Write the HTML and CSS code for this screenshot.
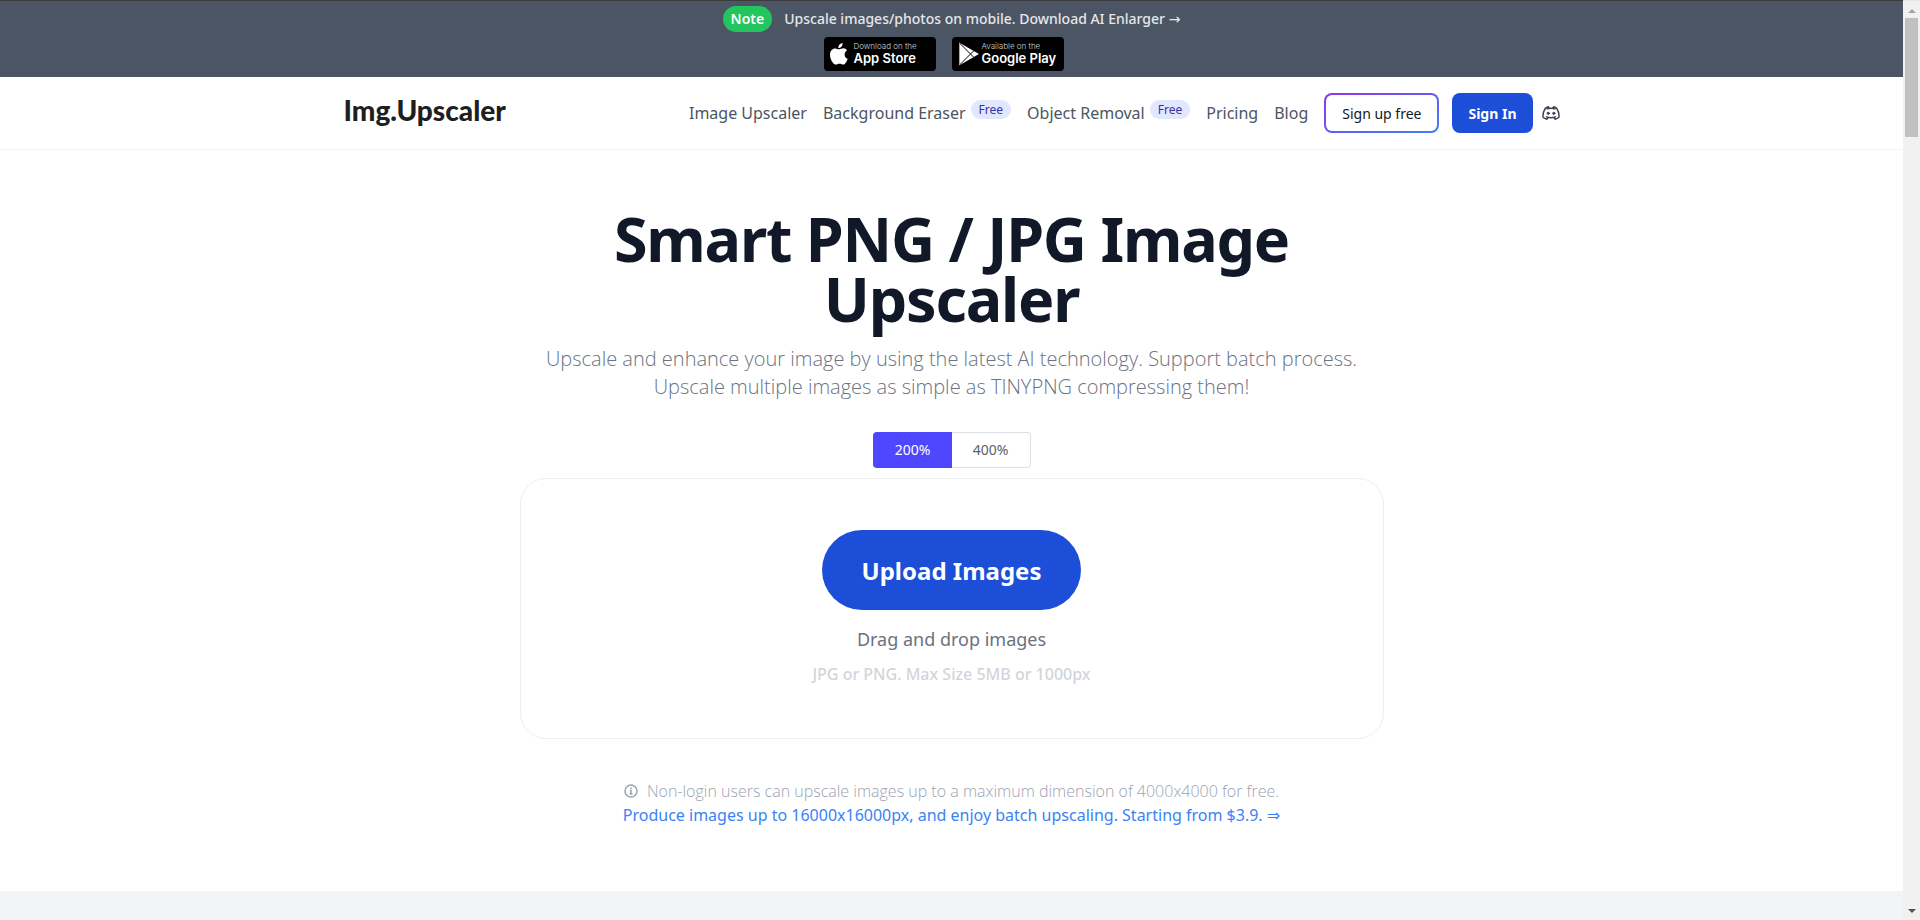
FILE: index.html
```html
<!DOCTYPE html>
<html lang="en">
<head>
    <meta charset="UTF-8">
    <meta name="viewport" content="width=device-width, initial-scale=1.0">
    <title>Img.Upscaler</title>
    <link rel="stylesheet" href="styles.css">
</head>
<body>
    <div class="page">
        <div class="banner">
            <div class="banner-line">
                <span class="note">Note</span>
                <a class="banner-link" href="#">Upscale images/photos on mobile. Download AI Enlarger <span class="arrow">→</span></a>
            </div>
            <div class="stores">
                <a class="store" href="#">
                    <svg class="apple" viewBox="0 0 18 22" width="18" height="22" fill="#fff" aria-hidden="true">
                        <path d="M12.6 0c.2 1.5-.4 2.800-1.200 3.700-.8.900-2 1.500-3 1.400-.2-1.300.4-2.600 1.200-3.500C10.400.7 11.600.1 12.600 0zM17 7.500c-1.500.9-2.400 2.200-2.400 4 0 2.100 1.200 3.600 3.100 4.300-.5 1.700-1.400 3.200-2.500 4.600-.7.900-1.500 1.300-2.500 1.200-1.200-.2-2-.8-3.300-.8s-2.200.7-3.300.8c-1.200.1-2-.6-2.900-1.600C1.100 17.600 0 14.700 0 11.700c0-3.900 2.400-6.300 5.200-6.300 1.600 0 2.700.9 4 .9 1.200 0 2.400-1 4.300-1 1.400 0 2.700.8 3.500 2.200z"/>
                    </svg>
                    <span class="store-text">
                        <small>Download on the</small>
                        <b>App Store</b>
                    </span>
                </a>
                <a class="store" href="#">
                    <svg class="play" viewBox="0 0 22 24" width="22" height="24" fill="#fff" aria-hidden="true">
                        <path d="M1 0.500L21 12 1 23.500z"/>
                        <path d="M1 .5L15.500 15M1 23.500L15.500 9" stroke="#000" stroke-width="1" fill="none"/>
                        <path d="M1.500 1v22" stroke="#aaa" stroke-width="1"/>
                    </svg>
                    <span class="store-text">
                        <small>Available on the</small>
                        <b>Google Play</b>
                    </span>
                </a>
            </div>
        </div>

        <header class="header">
            <div class="header-inner">
                <a class="logo" href="#">Img.Upscaler</a>
                <nav class="nav">
                    <a href="#">Image Upscaler</a>
                    <a href="#">Background Eraser <span class="free">Free</span></a>
                    <a href="#">Object Removal <span class="free">Free</span></a>
                    <a href="#">Pricing</a>
                    <a href="#">Blog</a>
                    <div class="account">
                        <button class="sign-up" type="button">Sign up free</button>
                        <button class="sign-in" type="button">Sign In</button>
                        <a class="discord" href="#" aria-label="Discord">
                            <svg viewBox="0 0 18 14" width="18" height="14" fill="none" stroke="#374151" stroke-width="1.400" stroke-linecap="round" stroke-linejoin="round">
                                <path d="M4.500 10.800c2.800 1.100 6.200 1.100 9 0M4.800 2.900c2.700-.9 5.700-.9 8.400 0"/>
                                <path d="M12 11.700l1 1.500c1.600-.4 2.900-1 4-1.900.3-3.400-.6-6.500-2.500-9.300-1-.6-1.900-1-3-1.200l-.7 1.400M6 11.700l-1 1.500c-1.600-.4-2.900-1-4-1.900-.3-3.400.6-6.500 2.500-9.300 1-.6 1.900-1 3-1.200l.7 1.400"/>
                                <circle cx="6.200" cy="7.300" r="1.100" fill="#374151" stroke-width="1"/>
                                <circle cx="11.800" cy="7.300" r="1.100" fill="#374151" stroke-width="1"/>
                            </svg>
                        </a>
                    </div>
                </nav>
            </div>
        </header>

        <main class="hero">
            <h1>Smart PNG / JPG Image Upscaler</h1>
            <p class="intro">Upscale and enhance your image by using the latest AI technology. Support batch process.<br>Upscale multiple images as simple as TINYPNG compressing them!</p>

            <div class="scale" role="radiogroup" aria-label="Scale">
                <input type="radio" name="scale" id="scale200" checked>
                <label for="scale200">200%</label>
                <input type="radio" name="scale" id="scale400">
                <label for="scale400">400%</label>
            </div>

            <div class="dropzone">
                <button class="upload" type="button">Upload Images</button>
                <p class="drag">Drag and drop images</p>
                <p class="limit">JPG or PNG. Max Size 5MB or 1000px</p>
            </div>

            <div class="tips">
                <p class="tip">
                    <svg viewBox="0 0 14 14" width="14" height="14" fill="none" stroke="#9ca3af" stroke-width="1.500" aria-hidden="true">
                        <circle cx="7" cy="7" r="6"/>
                        <path d="M5.800 6.500H7V10M5.500 10h3M7 3.500v1.500"/>
                    </svg>
                    Non-login users can upscale images up to a maximum dimension of 4000x4000 for free.
                </p>
                <a class="offer" href="#">Produce images up to 16000x16000px, and enjoy batch upscaling. Starting from $3.9. <span class="arrow">⇒</span></a>
            </div>
        </main>
        <section class="next"></section>
    </div>

    <div class="scrollbar" aria-hidden="true">
        <i class="up"></i>
        <i class="thumb"></i>
        <i class="down"></i>
    </div>
</body>
</html>
```
FILE: styles.css
```css
* {
    box-sizing: border-box;
}
body {
    margin: 0;
    display: flex;
    height: 100vh;
    overflow: hidden;
    font-family: "Noto Sans", "Open Sans", sans-serif;
    font-size: 16px;
    line-height: 24px;
    color: #111827;
    background: #fff;
}
a {
    color: inherit;
    text-decoration: none;
}
button {
    font-family: inherit;
    cursor: pointer;
}
h1, p {
    margin: 0;
}
.page {
    flex: 1;
    display: flex;
    flex-direction: column;
    min-width: 0;
}

/* top banner */
.banner {
    background: #4b5563;
    border-top: 1px solid #3b3b3d;
    padding: 5px 0 6px;
}
.banner-line {
    display: flex;
    justify-content: center;
    align-items: center;
    gap: 12px;
    font-size: 14px;
}
.note {
    background: #22c55e;
    color: #fff;
    font-weight: 600;
    line-height: 26px;
    padding: 0 8px;
    border-radius: 13px;
}
.banner-link {
    color: #e5e7eb;
    font-weight: 500;
}
.arrow {
    font-family: "DejaVu Sans", sans-serif;
}
.stores {
    display: flex;
    justify-content: center;
    gap: 16px;
    padding: 5px 16px 0 0;
}
.store {
    display: flex;
    align-items: center;
    gap: 6px;
    width: 112px;
    height: 34px;
    padding-left: 6px;
    background: #000;
    border-radius: 4px;
    color: #fff;
    font-family: Inter, sans-serif;
    white-space: nowrap;
}
.play {
    margin-right: -4px;
}
.store-text {
    display: flex;
    flex-direction: column;
}
.store-text small {
    font-size: 8px;
    line-height: 9px;
    font-weight: 300;
    color: #d1d5db;
}
.store-text b {
    font-size: 13px;
    line-height: 15px;
    font-weight: 600;
}

/* header */
.header {
    border-bottom: 1px solid #f3f4f6;
}
.header-inner {
    display: flex;
    justify-content: space-between;
    align-items: center;
    max-width: 1280px;
    margin: 0 auto;
    padding: 16px 32px;
}
.logo {
    font-family: Lato, sans-serif;
    font-size: 28px;
    line-height: 32px;
    font-weight: 900;
    color: #1f1f1f;
    padding-bottom: 6px;
}
.nav {
    display: flex;
    align-items: center;
    gap: 16px;
    color: #4b5563;
}
.nav > a {
    display: flex;
    align-items: center;
    gap: 5px;
}
.free {
    margin-bottom: 8px;
    padding: 0 8px;
    border-radius: 10px;
    background: #e0e7ff;
    color: #3730a3;
    font-size: 12px;
    line-height: 19px;
}
.account {
    display: flex;
    align-items: center;
}
.sign-up, .sign-in {
    height: 40px;
    padding: 0 16px;
    border-radius: 8px;
    font-size: 14px;
}
.sign-up {
    border: 2px solid transparent;
    background: linear-gradient(#fff, #fff) padding-box, linear-gradient(to bottom right, #9333ea, #3b82f6) border-box;
    color: #111827;
}
.sign-in {
    margin: 0 9px 0 13px;
    border: none;
    background: #1d4ed8;
    color: #fff;
    font-weight: 700;
}
.discord {
    display: flex;
}

/* hero */
.hero {
    flex: none;
    width: 100%;
    max-width: 864px;
    margin: 0 auto;
    padding: 59px 0 63px;
    text-align: center;
}
h1 {
    max-width: 768px;
    margin: 0 auto;
    font-size: 61px;
    line-height: 60px;
    font-weight: 700;
    letter-spacing: -0.02em;
}
.intro {
    margin-top: 16px;
    font-family: "Open Sans", sans-serif;
    font-size: 20px;
    line-height: 28px;
    font-weight: 300;
    color: #6b7280;
}
.scale {
    display: flex;
    justify-content: center;
    margin: 31px 0 10px;
    font-size: 14px;
    line-height: 34px;
}
.scale input {
    position: absolute;
    opacity: 0;
}
.scale label {
    width: 79px;
    border: 1px solid #dcdfe6;
    color: #606266;
    cursor: pointer;
}
.scale label:first-of-type {
    border-radius: 4px 0 0 4px;
    border-right: none;
}
.scale label:last-of-type {
    border-radius: 0 4px 4px 0;
    border-left: none;
}
.scale input:checked + label {
    background: #4f46ff;
    border-color: #4f46ff;
    color: #fff;
}
.dropzone {
    padding: 51px 0 50px;
    border: 1px solid #eeeff1;
    border-radius: 26px;
}
.upload {
    height: 80px;
    padding: 0 40px;
    border: none;
    border-radius: 40px;
    background: #1d4ed8;
    color: #fff;
    font-size: 24px;
    font-weight: 700;
}
.drag {
    margin-top: 15px;
    font-size: 18px;
    line-height: 28px;
    color: #6b7280;
}
.limit {
    margin-top: 7px;
    font-weight: 500;
    line-height: 28px;
    color: #d1d5db;
}
.tips {
    margin-top: 40px;
    white-space: nowrap;
}
.tip {
    display: flex;
    justify-content: center;
    align-items: center;
    gap: 9px;
    font-family: "Open Sans", sans-serif;
    font-weight: 300;
    color: #9ca3af;
}
.offer {
    color: #3b82f6;
}
.next {
    flex: 1;
    background: #f3f4f6;
}

/* window scrollbar */
.scrollbar {
    display: flex;
    flex-direction: column;
    align-items: center;
    width: 17px;
    padding: 8px 0 7px;
    background: #f1f1f1;
    border-top: 1px solid #e7e7e7;
}
.up {
    border: 4px solid transparent;
    border-top: none;
    border-bottom-color: #a3a3a3;
}
.thumb {
    width: 13px;
    height: 119px;
    margin-top: 5px;
    background: #c1c1c1;
}
.down {
    margin-top: auto;
    border: 4px solid transparent;
    border-bottom: none;
    border-top-color: #505050;
}
```
